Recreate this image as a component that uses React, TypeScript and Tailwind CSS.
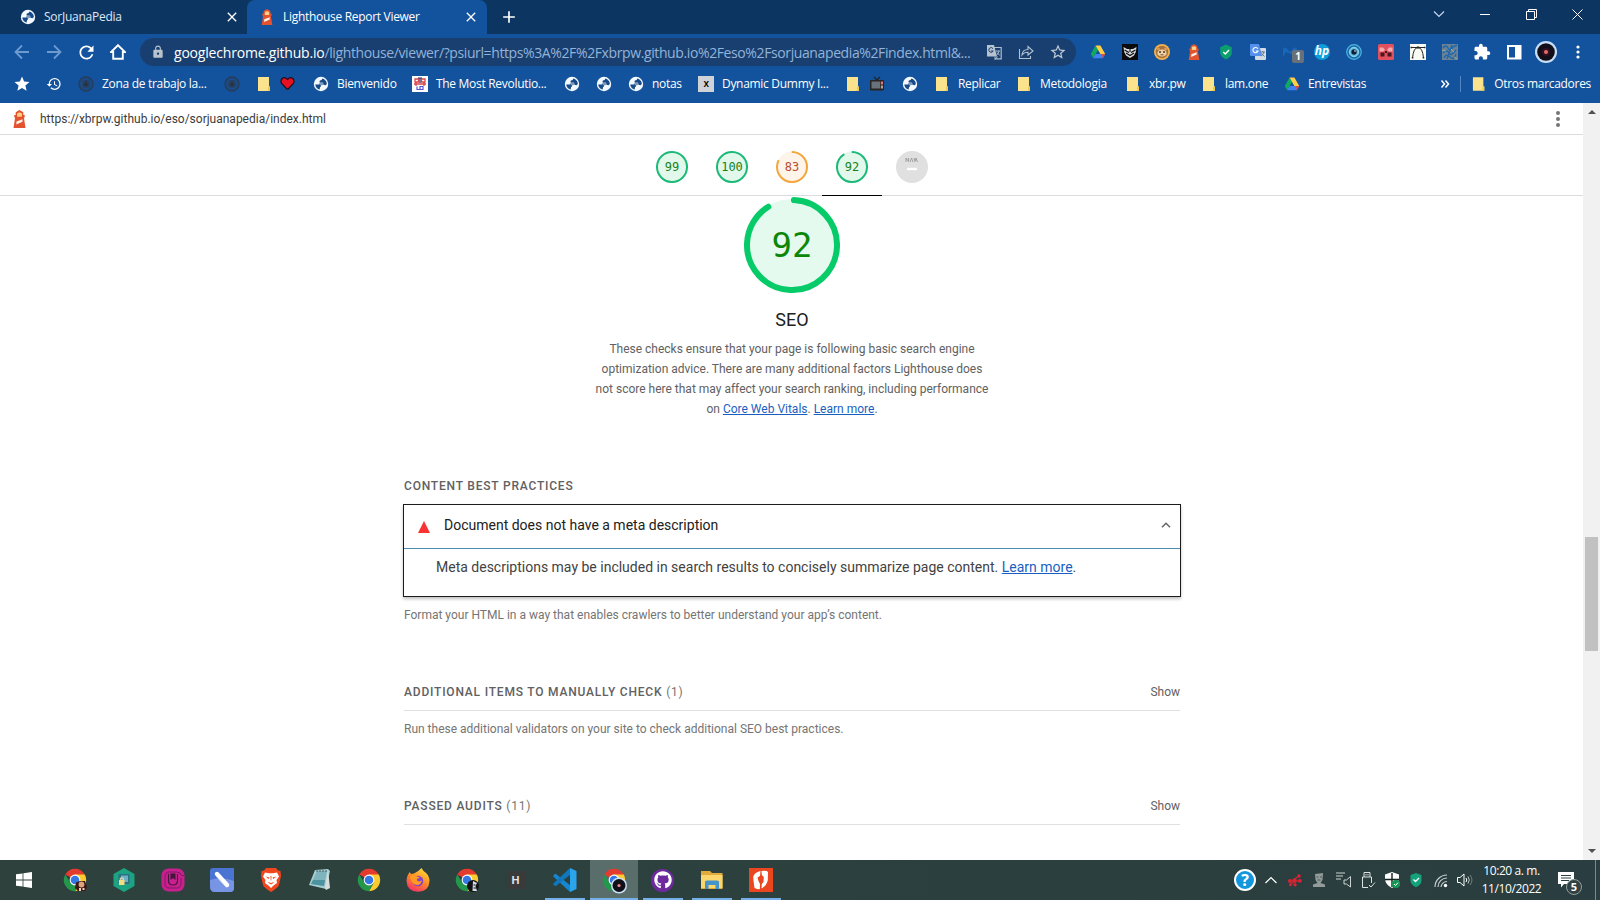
import React from "react";
import { MdLock, MdHistory, MdStar, MdStarBorder, MdExtension, MdRefresh, MdClose, MdAdd } from "react-icons/md";
import { FaGithub, FaHeart } from "react-icons/fa";

type Kids = { children?: React.ReactNode };

const Globe = () => (
  <svg viewBox="0 0 16 16" className="size-4 shrink-0">
    <circle cx="8" cy="8" r="7.2" fill="#f4f9ff" />
    <path d="M2.2 8.4 L6.4 8.6 Q8.4 9 8 10.6 Q6.800 11 6.800 12.200 V13.600 Q3 12.600 2.200 8.400 Z" fill="#174a86" />
    <path d="M9.400 2.400 Q9 4.400 7 4.600 Q6 5.400 6.800 6.400 H9.600 Q10.600 7 10.400 8.800 L12.600 9.200 Q13.800 8.800 13.800 7.600 Q13.400 3.600 9.400 2.400 Z" fill="#174a86" />
    <path d="M6.800 6.400 H9.600 L10.400 8.800 L8 9.600 L5.500 8.700 Z" fill="#174a86" opacity=".55" />
  </svg>
);

const Lighthouse = ({ className = "size-4" }: { className?: string }) => (
  <svg viewBox="0 0 16 18" className={className}>
    <path d="M8 0 L11.800 2.200 V5 H13.200 V7.500 H12.400 L14 18 H2 L3.600 7.500 H2.800 V5 H4.200 V2.200 Z" fill="#e4532f" />
    <path d="M5.600 3.400 Q8 1.600 10.400 3.400 V6.800 H5.600 Z" fill="#ffcf83" />
    <path d="M5 11.600 L11 9.200 V11.800 L4.800 14.600 Z" fill="#fff3e8" />
  </svg>
);

const Folder = () => (
  <svg viewBox="0 0 16 16" className="size-4">
    <path d="M2 1 H13 V10 L14 11 V15 H2 Z" fill="#fbe38e" />
    <path d="M12 10.5 H14 V15 H11 L12 14 Z" fill="#f2c94f" />
  </svg>
);

const Drive = ({ className = "size-4" }: { className?: string }) => (
  <svg viewBox="0 0 16 16" className={className}>
    <path d="M5.5 1.500 L.800 10 L3.100 14.300 L8 5.900 Z" fill="#11a861" />
    <path d="M5.500 1.500 H10.400 L15.200 10 H10.400 Z" fill="#ffcf48" />
    <path d="M5.600 10 H15.200 L12.800 14.300 H3.100 Z" fill="#3f82f4" />
    <path d="M11.800 10 H15.200 L12.800 14.300 Z" fill="#e94435" />
  </svg>
);

const Emblem = () => (
  <svg viewBox="0 0 16 16" className="size-4">
    <circle cx="8" cy="8" r="7" fill="#1b4a80" stroke="#263d5b" strokeWidth="1.300" />
    <circle cx="8" cy="8" r="4.800" fill="#23426a" stroke="#1c4f8c" />
    <path d="M8 4.500 L10.500 10 H5.500 Z" fill="#2a3240" />
  </svg>
);

const Tv = () => (
  <svg viewBox="0 0 16 16" className="size-4">
    <path d="M5 1 L8 4 L11 1" stroke="#222" strokeWidth="1.3" fill="none" />
    <rect x="1" y="4" width="14" height="10.5" rx="1" fill="#2a2323" />
    <rect x="2.5" y="5.5" width="8.5" height="7" fill="#67727a" />
    <rect x="11.8" y="5.5" width="2.2" height="3" fill="#e37b71" />
    <rect x="11.8" y="9.5" width="2.2" height="3" fill="#b7a196" />
  </svg>
);

const Chrome = ({ children }: Kids) => (
  <svg viewBox="0 0 24 24" className="size-6 overflow-visible">
    <path d="M12 12 L2.300 6.400 A11.200 11.200 0 0 1 21.700 6.400 Z" fill="#e33b2e" />
    <path d="M12 6.600 H21.800 A11.200 11.200 0 0 1 12 23.200 L16.700 14.700 Z" fill="#fccb2f" />
    <path d="M2.300 6.400 L7.300 14.700 L12 17.400 L16.200 15 L12 23.200 A11.200 11.200 0 0 1 2.300 6.400Z" fill="#23984b" />
    <circle cx="12" cy="12" r="5.400" fill="#fff" />
    <circle cx="12" cy="12" r="4.300" fill="#3478e4" />
    {children}
  </svg>
);

const Disc = () => (
  <svg viewBox="0 0 22 22" className="size-[22px]">
    <circle cx="11" cy="11" r="11" fill="#c9def7" />
    <circle cx="11" cy="11" r="8.800" fill="#120f19" />
    <circle cx="11" cy="11" r="4.200" fill="#2d1220" />
    <circle cx="11" cy="11" r="2" fill="#f0686f" />
  </svg>
);

/* ---------- title bar ---------- */

const TitleBar = () => (
  <div className="flex h-[34px] shrink-0 bg-[#0c3562] text-white">
    <div className="flex w-[247px] items-center pl-5">
      <Globe />
      <span className="ml-2 w-[180px] text-[12px] tracking-[-0.25px] whitespace-nowrap text-[#dce8f5]">SorJuanaPedia</span>
      <MdClose className="size-4" />
    </div>
    <div className="flex w-[240px] items-center rounded-t-lg bg-[#13529c] pl-3">
      <Lighthouse />
      <span className="ml-2 w-[180px] text-[12px] tracking-[-0.3px] whitespace-nowrap">Lighthouse Report Viewer</span>
      <MdClose className="size-4" />
    </div>
    <div className="flex flex-1 items-center pl-3">
      <MdAdd className="size-5" />
    </div>
    <div className="flex w-[184px] pb-1.5 text-white">
      <span className="flex w-[46px] items-center justify-center">
        <svg viewBox="0 0 12 12" className="size-3"><path d="M1 3.500 L6 8.500 L11 3.500" stroke="#c5d6e8" strokeWidth="1.200" fill="none" /></svg>
      </span>
      <span className="flex w-[46px] items-center justify-center">
        <svg viewBox="0 0 10 10" className="size-2.5"><path d="M0 5.500 H10" stroke="white" /></svg>
      </span>
      <span className="flex w-[46px] items-center justify-center">
        <svg viewBox="0 0 11 11" className="size-[11px]"><path d="M.5 2.5 H8.5 V10.5 H.5 Z M2.5 2.5 V.5 H10.5 V8.5 H8.5" stroke="white" fill="none" /></svg>
      </span>
      <span className="flex w-[46px] items-center justify-center">
        <svg viewBox="0 0 11 11" className="size-[11px]"><path d="M.5 .5 L10.5 10.5 M10.5 .5 L.5 10.5" stroke="white" fill="none" /></svg>
      </span>
    </div>
  </div>
);

/* ---------- toolbar ---------- */

const Slot = ({ children }: Kids) => <span className="relative flex w-8 shrink-0 items-center justify-center">{children}</span>;

const extensions: React.ReactNode[] = [
  <Drive />,
  <svg viewBox="0 0 16 16" className="size-4">
    <rect width="16" height="16" fill="#0b0b0d" />
    <path d="M1.500 3 L5 5 H11 L14.500 3 L13.800 8 L12 11.500 L8 14 L4 11.500 L2.200 8 Z" fill="#d6dadc" />
    <path d="M2.500 6 L7 8.600 M13.500 6 L9 8.600 M4 9 L8 11.500 L12 9 M8 4.500 V8" stroke="#0b0b0d" strokeWidth="1.100" fill="none" />
  </svg>,
  <svg viewBox="0 0 16 16" className="size-4">
    <circle cx="8" cy="8" r="8" fill="#f2b24c" />
    <circle cx="8" cy="8" r="6.200" fill="#a9713d" />
    <circle cx="4.500" cy="5" r="1.500" fill="#d99a5a" /><circle cx="11.500" cy="5" r="1.500" fill="#d99a5a" />
    <ellipse cx="8" cy="9" rx="4.600" ry="3.600" fill="#efd2a4" />
    <circle cx="6" cy="8" r=".900" fill="#33261d" /><circle cx="10" cy="8" r=".900" fill="#33261d" />
    <path d="M6.500 10.800 H9.500" stroke="#7a4a2b" />
  </svg>,
  <Lighthouse />,
  <svg viewBox="0 0 16 16" className="size-4">
    <path d="M8 .500 L13.800 3.200 V9 Q13.500 12.800 8 15.500 Q2.500 12.800 2.200 9 V3.200 Z" fill="#0c9f6e" />
    <path d="M5.300 8 L7.300 10 L11 6" stroke="white" strokeWidth="1.400" fill="none" />
  </svg>,
  <svg viewBox="0 0 16 16" className="size-4">
    <rect x="5" y="4" width="11" height="12" rx="1" fill="#d5dbe4" />
    <path d="M0 0 H9 L12 12 H1 Q0 12 0 11 Z" fill="#5590ec" />
    <path d="M7.800 4.800 A2.600 2.600 0 1 0 8 7 H5.800" stroke="white" strokeWidth="1.100" fill="none" />
    <path d="M10.500 8 H15 M12.800 7 V8 M14 8 Q13 11 11 12.200 M11.500 9.500 L14.500 12.500" stroke="#5d7284" strokeWidth=".900" fill="none" />
  </svg>,
  <>
    <svg viewBox="0 0 16 16" className="size-4">
      <path d="M1 13 V5 Q2 2.500 4.500 4.200 L8 8 L11.500 4.200 Q14 2.500 15 5 V9 L12 11.500 L8 9.500 L4 8 Z" fill="#1a66bb" />
    </svg>
    <span className="absolute top-1.5 left-[18px] flex h-[13px] w-3 items-center justify-center rounded-[2px] bg-[#68707a] text-[10px] font-bold text-white">1</span>
  </>,
  <span className="flex size-4 items-center justify-center rounded-full bg-[#0d9ddb] pb-0.5 text-[12px] font-bold text-white italic">hp</span>,
  <svg viewBox="0 0 16 16" className="size-4">
    <circle cx="8" cy="8" r="7.300" fill="#1b6aa6" stroke="#4bb4e4" strokeWidth="1.200" />
    <circle cx="8" cy="8" r="4.700" fill="#69bfe4" stroke="#8ad4ee" />
    <circle cx="8" cy="8" r="2.700" fill="#0b2136" /><circle cx="9" cy="7" r=".800" fill="white" />
  </svg>,
  <svg viewBox="0 0 16 16" className="size-4">
    <rect width="16" height="16" rx="1.500" fill="#e3505d" />
    <path d="M1.500 3.500 H5 L7 6 L5 7.500 H1.500 Z M14.500 3.500 H11 L9 6 L11 7.500 H14.500 Z" fill="#f5a9ad" />
    <path d="M2.500 8.500 H6.500 V12.500 H2.500 Z M9.500 8.500 H13.500 V12.500 H9.500 Z M7 7 H9 V9 H7 Z" fill="#4b1721" />
  </svg>,
  <svg viewBox="0 0 16 16" className="size-4">
    <rect width="16" height="16" fill="#fbfbf6" />
    <path d="M1 3.500 H15 M2.500 14 Q3.500 3.500 8 3.500 Q12.500 3.500 13.500 14" stroke="#252525" strokeWidth="1" fill="none" />
    <path d="M6.900 2.400 H9.100 V4.600 H6.900 Z M.500 2.800 H2 V4.300 H.500 Z M14 2.800 H15.500 V4.300 H14 Z M1.800 13 H3.300 V14.500 H1.800 Z M12.700 13 H14.200 V14.500 H12.700 Z" fill="#252525" />
  </svg>,
  <svg viewBox="0 0 16 16" className="size-4">
    <rect width="16" height="16" fill="#6b8294" />
    <path d="M1 4 Q4 0 6 4 T11 3 L15 1 M1 9 Q5 5 7 9 T14 6 M2 14 Q4 9 8 13 T14 10 M10 1 L5 15" stroke="#1e67ac" strokeWidth="1.400" fill="none" />
    <path d="M0 6 L4 7 M9 5 L12 8 M12 13 L15 15" stroke="#a2a59a" strokeWidth="1" />
  </svg>,
  <MdExtension className="size-[18px] text-white" />,
  <svg viewBox="0 0 16 16" className="size-4"><path d="M2 2 H14.500 V14.500 H2 Z" fill="none" stroke="white" strokeWidth="2" /><rect x="9" y="2" width="5.500" height="12" fill="white" /></svg>,
  <Disc />,
  <svg viewBox="0 0 4 16" className="h-4 w-1"><circle cx="2" cy="3" r="1.600" fill="white" /><circle cx="2" cy="8" r="1.600" fill="white" /><circle cx="2" cy="13" r="1.600" fill="white" /></svg>,
];

const Toolbar = () => (
  <div className="flex h-9 shrink-0 items-center bg-[#13529c] pl-1.5 text-white">
    <Slot><svg viewBox="0 0 16 16" className="size-4"><path d="M15 8 H1.800 M8 1.500 L1.500 8 L8 14.500" stroke="#6d9bd0" strokeWidth="1.800" fill="none" /></svg></Slot>
    <Slot><svg viewBox="0 0 16 16" className="size-4"><path d="M1 8 H14.200 M8 1.500 L14.500 8 L8 14.500" stroke="#6d9bd0" strokeWidth="1.800" fill="none" /></svg></Slot>
    <Slot><MdRefresh className="size-[21px]" /></Slot>
    <Slot><svg viewBox="0 0 16 16" className="size-4"><path d="M8 1.200 L1 8 H3.200 V14.800 H12.800 V8 H15 Z" stroke="white" strokeWidth="1.900" fill="none" /></svg></Slot>
    <div className="ml-1.5 flex h-7 w-[936px] shrink-0 items-center rounded-full bg-[#183f70] pl-[11px]">
      <MdLock className="size-3.5 text-[#b9c3cd]" />
      <span className="ml-[9px] w-[804px] text-[14px] tracking-[-0.39px] whitespace-nowrap text-[#93b3d9]">
        <span className="tracking-[-0.2px] text-white">googlechrome.github.io</span>/lighthouse/viewer/?psiurl=https%3A%2F%2Fxbrpw.github.io%2Feso%2Fsorjuanapedia%2Findex.html&amp;...
      </span>
      <Slot>
        <svg viewBox="0 0 16 16" className="size-4">
          <path d="M6 3.500 H15.200 V14.800 H9" fill="none" stroke="#aebdcd" strokeWidth="1.200" />
          <path d="M1 1 H8 L11 12.500 H1 Z" fill="#b6c2cd" />
          <path d="M7 4.600 A2.300 2.300 0 1 0 7.200 7 H5" stroke="#183f70" fill="none" />
          <path d="M9.800 7 H14 M13 7 Q12.500 10 10.500 11 M11 8.500 L13.800 11.500 M9 12.500 L9 15.500 L11.500 12.500" stroke="#aebdcd" fill="none" />
        </svg>
      </Slot>
      <Slot>
        <svg viewBox="0 0 16 16" className="size-4"><path d="M1.500 5 V14.500 H12.500 V12 M4 11 Q4.500 5.500 10 5.500 V2.500 L15 7 L10 11 V8.300 Q6 8.300 4 11 Z" stroke="#b3c0ce" strokeWidth="1.100" fill="none" /></svg>
      </Slot>
      <Slot><MdStarBorder className="size-[18px] text-[#c3ccd5]" /></Slot>
    </div>
    <div className="ml-1.5 flex items-center">
      {extensions.map((e, i) => <Slot key={i}>{e}</Slot>)}
    </div>
  </div>
);

/* ---------- bookmarks ---------- */

const Mark = ({ w, icon, children }: Kids & { w: string; icon: React.ReactNode }) => (
  <div className={"flex shrink-0 items-center gap-2 text-[12px] tracking-[-0.3px] whitespace-nowrap " + w}>
    {icon}
    {children && <span>{children}</span>}
  </div>
);

const Bookmarks = () => (
  <div className="flex h-[33px] shrink-0 items-center bg-[#13529c] pb-1.5 pl-3.5 text-white">
    <Mark w="w-8" icon={<MdStar className="size-[18px] -ml-px" />} />
    <Mark w="w-8" icon={<MdHistory className="size-4" />} />
    <Mark w="w-[146px]" icon={<Emblem />}>Zona de trabajo la...</Mark>
    <Mark w="w-8" icon={<Emblem />} />
    <Mark w="w-[25px]" icon={<Folder />} />
    <Mark w="w-8" icon={<FaHeart className="size-[13px] overflow-visible stroke-[#240d18] stroke-[50] text-[#e81123]" />} />
    <Mark w="w-[99px]" icon={<Globe />}>Bienvenido</Mark>
    <Mark
      w="w-[152px]"
      icon={
        <svg viewBox="0 0 16 16" className="size-4">
          <rect width="16" height="16" fill="#fff" />
          <path d="M3 3 H6.500 V6 H3 Z M9.500 3 H13 V6 H9.500 Z M2 8 H14 M4 6 V10 M12 6 V10" stroke="#d8454c" strokeWidth="1.300" fill="none" />
          <path d="M8 1.500 V7 M6 2 H10" stroke="#222c55" strokeWidth="1.200" /><path d="M5 10.500 V13.500 H11 V10.500 H8 V13" stroke="#5656d8" strokeWidth="1.200" fill="none" />
        </svg>
      }
    >The Most Revolutio...</Mark>
    <Mark w="w-8" icon={<Globe />} />
    <Mark w="w-8" icon={<Globe />} />
    <Mark w="w-[70px]" icon={<Globe />}>notas</Mark>
    <Mark w="w-[147px]" icon={<span className="flex size-4 items-center justify-center bg-[#cfd2d6] text-[10px] font-semibold text-black">x</span>}>Dynamic Dummy I...</Mark>
    <Mark w="w-6" icon={<Folder />} />
    <Mark w="w-[33px]" icon={<Tv />} />
    <Mark w="w-8" icon={<Globe />} />
    <Mark w="w-[82px]" icon={<Folder />}>Replicar</Mark>
    <Mark w="w-[109px]" icon={<Folder />}>Metodologia</Mark>
    <Mark w="w-[76px]" icon={<Folder />}>xbr.pw</Mark>
    <Mark w="w-[83px]" icon={<Folder />}>lam.one</Mark>
    <Mark w="w-[156px]" icon={<Drive />}>Entrevistas</Mark>
    <svg viewBox="0 0 10 10" className="w-2.5 shrink-0"><path d="M1.500 1.500 L4.500 5 L1.500 8.500 M5.500 1.500 L8.500 5 L5.500 8.500" stroke="white" strokeWidth="1.500" fill="none" /></svg>
    <span className="mr-2.5 ml-2.5 h-4 w-px shrink-0 bg-[#5385c0]" />
    <Mark w="w-[120px]" icon={<Folder />}>Otros marcadores</Mark>
  </div>
);

/* ---------- report ---------- */

const gauges: { v: string; len: number; ring: string; fill: string; ink: string }[] = [
  { v: "99", len: 100, ring: "#1cb978", fill: "#e2f8eb", ink: "#178217" },
  { v: "100", len: 100, ring: "#1cb978", fill: "#e2f8eb", ink: "#178217" },
  { v: "83", len: 81, ring: "#f2a63c", fill: "#fff4ea", ink: "#b84a2a" },
  { v: "92", len: 90, ring: "#1cb978", fill: "#e2f8eb", ink: "#178217" },
];

const Gauges = () => (
  <div className="flex h-[61px] shrink-0 justify-center border-b border-[#dadce0] pl-[1px]">
    {gauges.map((g, i) => (
      <div key={g.v} className={i === 3 ? "relative -mb-px flex w-[60px] justify-center border-b border-black pt-4" : "relative flex w-[60px] justify-center pt-4"}>
        <div className="grid size-8 place-items-center">
          <svg viewBox="0 0 32 32" className="col-start-1 row-start-1 size-8">
            <circle cx="16" cy="16" r="15.500" fill={g.fill} />
            <circle cx="16" cy="16" r="15" transform="rotate(-88 16 16)" fill="none" stroke={g.ring} strokeWidth="2" pathLength="100" strokeDasharray={`${g.len} 100`} strokeLinecap="round" />
          </svg>
          <span className="relative col-start-1 row-start-1 font-['DejaVu_Sans_Mono',monospace] text-[12px] leading-none" style={{ color: g.ink }}>{g.v}</span>
        </div>
      </div>
    ))}
    <div className="flex w-[60px] justify-center pt-4">
      <svg viewBox="0 0 32 32" className="size-8">
        <circle cx="16" cy="16" r="16" fill="#e0e0e0" />
        <path d="M10 11 V7 L12.500 10.500 V7 M14 11 L15.500 7 L17 11 M18 7 L19 10.500 L20 7 L21.500 11" stroke="#a0a0a0" strokeWidth="1" fill="none" />
        <path d="M11 18 H21" stroke="white" strokeWidth="2.400" />
      </svg>
    </div>
  </div>
);

const Clump = ({ title, count }: { title: string; count: string }) => (
  <div className="flex h-[37px] items-center justify-between border-b border-[#e0e0e0] text-[12px] text-[#616161]">
    <span className="font-medium tracking-[0.8px]">{title} <span className="font-normal text-[#757575]">{count}</span></span>
    <span>Show</span>
  </div>
);

const Report = () => (
  <div className="flex min-w-0 flex-1 flex-col overflow-hidden bg-white font-['Roboto',sans-serif]">
    <div className="flex h-8 shrink-0 items-center border-b border-[#dadce0] pl-[11px]">
      <Lighthouse className="h-[18px] w-[17px]" />
      <span className="ml-3 flex-1 text-[12px] text-[#3c3c3c]">https://xbrpw.github.io/eso/sorjuanapedia/index.html</span>
      <svg viewBox="0 0 4 16" className="mr-[23px] h-4 w-1"><circle cx="2" cy="2" r="2" fill="#757575" /><circle cx="2" cy="8" r="2" fill="#757575" /><circle cx="2" cy="14" r="2" fill="#757575" /></svg>
    </div>
    <Gauges />
    <div className="ml-[404px] flex w-[776px] flex-col">
      <div className="mt-px grid place-items-center">
        <svg viewBox="0 0 96 96" className="col-start-1 row-start-1 size-24">
          <circle cx="48" cy="48" r="46" fill="#e5faee" />
          <circle cx="48" cy="48" r="45" transform="rotate(-87.500 48 48)" fill="none" stroke="#06cb68" strokeWidth="6" pathLength="100" strokeDasharray="90.500 100" strokeLinecap="round" />
        </svg>
        <span className="relative col-start-1 row-start-1 font-['DejaVu_Sans_Mono',monospace] text-[34px] leading-none text-[#0b8708]">92</span>
      </div>
      <h1 className="mt-[15px] text-center text-[18px] leading-6 text-[#212121]">SEO</h1>
      <p className="mx-auto mt-[7px] w-[400px] text-center text-[12px] leading-5 text-[#616161]">
        These checks ensure that your page is following basic search engine<br />
        optimization advice. There are many additional factors Lighthouse does<br />
        not score here that may affect your search ranking, including performance<br />
        on <a className="text-[#1a5fc0] underline">Core Web Vitals</a>. <a className="text-[#1a5fc0] underline">Learn more</a>.
      </p>
      <h2 className="mt-[57px] text-[12px] leading-5 font-medium tracking-[0.8px] text-[#616161]">CONTENT BEST PRACTICES</h2>
      <div className="-mx-px mt-2 h-[93px] border border-[#1c1c1c] text-[14px] shadow-[0_2px_3px_rgba(0,0,0,0.25)]">
        <div className="flex h-11 items-center border-b border-[#4a8dae] pr-[9px] pl-3.5 text-[#212121]">
          <svg viewBox="0 0 12 12" className="size-3"><path d="M6 0 L12 12 H0 Z" fill="#f93333" /></svg>
          <span className="ml-3.5 flex-1 pb-0.5">Document does not have a meta description</span>
          <svg viewBox="0 0 10 6" className="mb-1 h-1.5 w-2.5"><path d="M1 5.200 L5 1.200 L9 5.200" stroke="#666" strokeWidth="1.500" fill="none" /></svg>
        </div>
        <p className="pt-2 pl-8 leading-5 text-[#424242]">
          Meta descriptions may be included in search results to concisely summarize page content. <a className="text-[#1a5fc0] underline">Learn more</a>.
        </p>
      </div>
      <p className="mt-2 text-[12px] leading-5 text-[#757575]">Format your HTML in a way that enables crawlers to better understand your app’s content.</p>
      <div className="mt-[49px]"><Clump title="ADDITIONAL ITEMS TO MANUALLY CHECK" count="(1)" /></div>
      <p className="mt-2 text-[12px] leading-5 text-[#757575]">Run these additional validators on your site to check additional SEO best practices.</p>
      <div className="mt-[49px]"><Clump title="PASSED AUDITS" count="(11)" /></div>
    </div>
  </div>
);

const Scrollbar = () => (
  <div className="flex w-[17px] shrink-0 flex-col items-center bg-[#f1f1f1]">
    <svg viewBox="0 0 8 4" className="mt-[7px] h-1 w-2"><path d="M0 4 L4 0 L8 4 Z" fill="#505050" /></svg>
    <span className="mt-[423px] h-[114px] w-[13px] bg-[#c1c1c1]" />
    <span className="flex-1" />
    <svg viewBox="0 0 8 4" className="mb-[7px] h-1 w-2"><path d="M0 0 L4 4 L8 0 Z" fill="#505050" /></svg>
  </div>
);

/* ---------- taskbar ---------- */

const apps: { icon: React.ReactNode; open?: boolean; active?: boolean }[] = [
  {
    icon: (
      <Chrome>
        <path d="M13 14.500 L17 13 H22 L24 19 L22 23 H15 L12 20 Z" fill="#3c1713" /><circle cx="18.500" cy="16.500" r="2.900" fill="#dca47d" /><path d="M16 20 H18 V23 H16 Z M19.500 20 H21.500 V22 H19.500 Z" fill="#f0d6c6" />
      </Chrome>
    ),
  },
  {
    icon: (
      <svg viewBox="0 0 24 24" className="size-6">
        <path d="M12 0 L22.500 6 V18 L12 24 L1.500 18 V6 Z" fill="#1ba382" />
        <rect x="6.500" y="6" width="11" height="10" rx="1" fill="#2c6f86" /><path d="M9 7.500 H16 V14 H9 Z" fill="#6fb0c4" /><rect x="7" y="12" width="5.500" height="5" fill="#f4dc80" /><path d="M8.300 12 V10 H11.200 V12" stroke="#f6e5b0" fill="none" />
      </svg>
    ),
  },
  {
    icon: (
      <svg viewBox="0 0 24 24" className="size-6">
        <rect x=".500" y=".500" width="23" height="23" rx="7" fill="#c9208f" />
        <path d="M23 7.500 H20.500 Q19.500 4 15.500 4 H8.500 Q4 4 4 8.500 V15.500 Q4 20 8.500 20 H15.500 Q20 20 20 15.500 V10" fill="none" stroke="#7c1a5c" strokeWidth="1" />
        <path d="M7.500 6 V12.500 Q7.500 17 12 17 T16.500 12.500 V6" fill="none" stroke="#4a143c" strokeWidth="1.200" />
        <path d="M9.500 5.500 H14.500 V12 L12 10 L9.500 12 Z" fill="#40163a" />
      </svg>
    ),
  },
  {
    icon: (
      <svg viewBox="0 0 24 24" className="size-6">
        <path d="M3 0 H24 V20 Q24 24 20 24 H5 Q0 24 0 18 V3 Q0 0 3 0 Z" fill="#4a74d2" /><path d="M0 12 Q12 8 24 13 V20 Q24 24 20 24 H5 Q0 24 0 18 Z" fill="#7894e4" />
        <path d="M7 6 L17 17" stroke="white" strokeWidth="4.400" strokeLinecap="round" /><path d="M6.500 8.500 L15 18" stroke="#c9d1e8" strokeWidth="1" />
      </svg>
    ),
  },
  {
    icon: (
      <svg viewBox="0 0 24 24" className="size-6">
        <path d="M7 0 H17 L19 2.500 L21.500 3 L22 8 L20 17 Q19 19.500 12 24 Q5 19.500 4 17 L2 8 L2.500 3 L5 2.500 Z" fill="#f1471f" />
        <path d="M6 4.500 L10 5.300 H14 L18 4.500 L20 8.500 L17.500 12 L18 15 L14.500 17.500 L12 20 L9.500 17.500 L6 15 L6.500 12 L4 8.500 Z" fill="white" />
        <path d="M6.500 8.500 L10.500 9.600 L9.800 11 Z M17.500 8.500 L13.500 9.600 L14.200 11 Z M8.500 14.300 L11 14.500 L12 15.300 L13 14.500 L15.500 14.300 L12 16.600 Z M11.500 8 H12.500 L12.300 12.500 H11.700 Z" fill="#f1471f" />
      </svg>
    ),
  },
  {
    icon: (
      <svg viewBox="0 0 24 24" className="size-6">
        <path d="M7 2 L20 1 L22 3 L18 21 L1 17 Z" fill="#a5cdd2" /><path d="M9 3 L19 3 L16 18 L3 16 Z" fill="#7fb4bd" /><path d="M5 12 L17 12 L16 18 L3 16 Z" fill="#4c929f" /><path d="M20 2 L22 20 L18 22 L17 20 Z" fill="#d8dedb" />
        <path d="M9 2 V4 M12 2 V4 M15 2 V4 M18 2 V4" stroke="#495a5c" />
      </svg>
    ),
  },
  { icon: <Chrome /> },
  {
    icon: (
      <svg viewBox="0 0 24 24" className="size-6">
        <defs><linearGradient id="fx" x1=".8" y1="0" x2=".3" y2="1"><stop offset="0" stopColor="#ffe23d" /><stop offset=".5" stopColor="#ff8a26" /><stop offset="1" stopColor="#f4316a" /></linearGradient></defs>
        <path d="M15.500 0 Q17 3 19.500 4.500 Q23.500 8 23.500 13 Q23 23.500 12 23.800 Q1 23.500 .500 13 Q.500 8.500 3.500 4 L5 6 L8 5.500 Q12 4 15.500 0 Z" fill="url(#fx)" />
        <circle cx="12" cy="13" r="5.300" fill="#8446c8" />
        <path d="M4 9 Q8 6 11 8.500 Q13 8.500 14 10 Q10 10 11 12.500 Q14 14.500 16 12 Q15 17 11 17 Q5.500 16 4 9 Z" fill="#ff9b22" />
      </svg>
    ),
  },
  {
    icon: (
      <Chrome>
        <circle cx="18" cy="18" r="6" fill="#101217" /><path d="M18 13 L22 15 L20.500 18 L22 23 H17.500 Z" fill="#d5dde2" /><path d="M18.500 17 H20.500 M18.500 20 H21" stroke="#101217" />
      </Chrome>
    ),
  },
  { icon: <span className="flex size-[18px] items-center justify-center bg-[#3a3a3b] font-['Liberation_Sans',sans-serif] text-[11px] font-bold text-[#e5e5e5]">H</span> },
  {
    icon: (
      <svg viewBox="0 0 24 24" className="size-6">
        <path d="M17 6.500 V17.500 L9.500 12 Z" fill="#2c413e" />
        <path d="M17 24 L17.500 17.500 L3 6 L1.800 6 L.300 7.400 V8.600 Z" fill="#1686cf" />
        <path d="M17 0 L17.500 6.500 L3 18 L1.800 18 L.300 16.600 V15.400 Z" fill="#1077bd" />
        <path d="M17 0 L23.500 3 V21 L17 24 Z" fill="#2aa5ed" />
      </svg>
    ),
    open: true,
  },
  {
    icon: (
      <Chrome>
        <circle cx="17" cy="17.500" r="8" fill="#cadef5" /><circle cx="17" cy="17.500" r="6.500" fill="#111018" /><circle cx="17" cy="17.500" r="1.600" fill="#ee8590" />
      </Chrome>
    ),
    active: true,
    open: true,
  },
  { icon: <span className="flex size-[23px] items-center justify-center rounded-full bg-[#6e2a9d]"><FaGithub className="size-[18px] text-white" /></span>, open: true },
  {
    icon: (
      <svg viewBox="0 0 24 24" className="size-6">
        <path d="M1 3 H10 L12 5 H22.500 V21 H1 Z" fill="#e0aa3c" /><path d="M1 7 H22.500 V20 H1 Z" fill="#fbd66e" /><path d="M5 21 V14 Q5 12.500 7 12.500 H17 Q19 12.500 19 14 V21 H15.500 V17 H8.500 V21 Z" fill="#4794c8" />
      </svg>
    ),
    open: true,
  },
  {
    icon: (
      <svg viewBox="0 0 24 24" className="size-6">
        <rect width="24" height="24" fill="#ea4620" />
        <path d="M11.500 3 Q5 4.500 4.200 9 L4.500 12.500 L5.500 20 Q8 21.500 10.800 21 L11 16 L9.500 13 L8.500 9.500 L11 8 Z" fill="white" />
        <path d="M12.500 3 Q17.500 2 19 4 L18.800 12 Q18 17.500 12.500 20.500 L12.800 16 L14.500 14 L14.800 9 L12.800 7 Z" fill="white" />
      </svg>
    ),
    open: true,
  },
];

const Tray = ({ w, children }: Kids & { w: string }) => <span className={"flex shrink-0 items-center justify-center " + w}>{children}</span>;

const Taskbar = () => (
  <div className="flex h-10 shrink-0 bg-linear-to-r from-[#2e413d] via-[#2c413e] to-[#2a3d40] text-white">
    <div className="flex w-[50px] items-center pl-4">
      <svg viewBox="0 0 16 16" className="size-4"><path d="M0 2.300 L6.600 1.400 V7.600 H0 Z M7.400 1.300 L16 0 V7.600 H7.400 Z M0 8.400 H6.600 V14.600 L0 13.700 Z M7.400 8.400 H16 V16 L7.400 14.700 Z" fill="white" /></svg>
    </div>
    {apps.map((a, i) => (
      <div key={i} className="flex w-[49px] shrink-0 justify-center">
        <div className={a.active ? "flex w-12 flex-col items-center justify-between bg-[#596d6a]" : "flex w-10 flex-col items-center justify-between"}>
          <span className="flex h-[38px] items-center pt-0.5">{a.icon}</span>
          {a.open && <span className="h-0.5 w-full bg-[#76b0ea]" />}
        </div>
      </div>
    ))}
    <div className="flex-1" />
    <Tray w="w-[28px]">
      <span className="flex size-[22px] items-center justify-center rounded-full border-2 border-white bg-[#1397dc] text-[16px] font-bold">?</span>
    </Tray>
    <Tray w="w-6"><svg viewBox="0 0 12 8" className="h-2 w-3"><path d="M.500 7 L6 1.500 L11.500 7" stroke="white" strokeWidth="1.200" fill="none" /></svg></Tray>
    <Tray w="w-6"><svg viewBox="0 0 16 16" className="size-4"><path d="M5.500 9 L9 6 L12 4 M4 12 L8 9 L13 9" stroke="#da2434" strokeWidth="1.200" fill="none" /><circle cx="3" cy="9" r="2" fill="#da2434" /><circle cx="7.500" cy="8.500" r="2.300" fill="#da2434" /><circle cx="12" cy="4" r="1.800" fill="#da2434" /><circle cx="12.800" cy="8.800" r="1.900" fill="#da2434" /><circle cx="8" cy="12.700" r="1.700" fill="#da2434" /><circle cx="3.500" cy="12.800" r="1.500" fill="#da2434" /></svg></Tray>
    <Tray w="w-6"><svg viewBox="0 0 16 16" className="size-4"><path d="M4 2 L12 1 L11.500 8 L9.500 11 L14 12.500 V15 H2 V12.500 L6.500 11 L4.500 8 Z" fill="#929b9a" /><path d="M5.500 5 H7.500 M9 5 H11 M6.500 8 H9.500" stroke="#4b5856" /></svg></Tray>
    <Tray w="w-[25px]"><svg viewBox="0 0 16 16" className="size-4"><path d="M0 1 H9 M0 4 H7 M0 7 H5" stroke="#ccd3d3" strokeWidth="1.100" /><path d="M8 8 H10.500 L14.500 4.500 V15 L10.500 12 H8 Z" stroke="#ccd3d3" fill="none" /></svg></Tray>
    <Tray w="w-6"><svg viewBox="0 0 16 18" className="h-[18px] w-4"><path d="M4 6 V1.500 H10 V6 M2.500 6 H11.500 V12 M2.500 6 V16.500 H8 M9 14 L11 16 L15 11.500" stroke="#dde2e2" fill="none" /><path d="M6 3 V4.500 M8 3 V4.500" stroke="#dde2e2" /></svg></Tray>
    <Tray w="w-6"><svg viewBox="0 0 16 16" className="size-4"><path d="M8 0 L15 2.500 V7 Q14.500 13 8 16 Q1.500 13 1 7 V2.500 Z" fill="white" /><path d="M8 1 V15 M1 7.500 H15" stroke="#14211f" strokeWidth="1.400" /><circle cx="12" cy="12" r="4.300" fill="#169557" /><path d="M10 12 L11.500 13.500 L14 10.700" stroke="white" fill="none" /></svg></Tray>
    <Tray w="w-6"><svg viewBox="0 0 16 16" className="size-4"><path d="M8 1 L13.500 3 V9 Q13 13 8 15.300 Q3 13 2.500 9 V3 Z" fill="#13a27b" /><path d="M5.500 7.500 L7.500 9.500 L11 6" stroke="white" strokeWidth="1.400" fill="none" /></svg></Tray>
    <Tray w="w-[25px]"><svg viewBox="0 0 16 16" className="size-4"><path d="M2 15 A12 12 0 0 1 14 3 M5 15 A9 9 0 0 1 14 6 M8 15 A6 6 0 0 1 14 9.500" stroke="#c7cfcf" strokeWidth="1.200" fill="none" /><circle cx="12.500" cy="13.500" r="1.700" fill="white" /></svg></Tray>
    <Tray w="w-6"><svg viewBox="0 0 18 16" className="h-4 w-[18px]"><path d="M1.500 5.500 H4 L8 2 V14 L4 10.500 H1.500 Z M10 6 Q11.500 8 10 10" stroke="white" fill="none" /><path d="M12 4.500 Q14.500 8 12 11.500" stroke="#c2caca" fill="none" /><path d="M14 3 Q18 8 14 13" stroke="#75817f" fill="none" /></svg></Tray>
    <div className="flex w-[72px] shrink-0 flex-col items-center justify-center pr-[3px] text-[12px] leading-[18px] tracking-[-0.4px] whitespace-nowrap">
      <span>10:20 a. m.</span>
      <span>11/10/2022</span>
    </div>
    <div className="relative flex w-[46px] items-center pl-[9px]">
      <svg viewBox="0 0 16 16" className="size-4"><path d="M0 0 H16 V12 H6 L3 15.500 V12 H0 Z" fill="white" /><path d="M3 3.500 H13 M3 6 H13 M3 8.500 H11" stroke="#2b3d40" /></svg>
      <span className="absolute top-[19px] left-[17px] flex size-4 items-center justify-center rounded-full border border-[#95a09f] bg-[#2f4143] text-[11px] font-bold">5</span>
    </div>
    <div className="w-[5px] border-l border-[#7d8b8b]" />
  </div>
);

export default function App() {
  return (
    <div className="flex h-[900px] w-[1600px] flex-col overflow-hidden bg-white font-['Open_Sans','Noto_Sans',sans-serif]">
      <TitleBar />
      <Toolbar />
      <Bookmarks />
      <div className="flex min-h-0 flex-1">
        <Report />
        <Scrollbar />
      </div>
      <Taskbar />
    </div>
  );
}
